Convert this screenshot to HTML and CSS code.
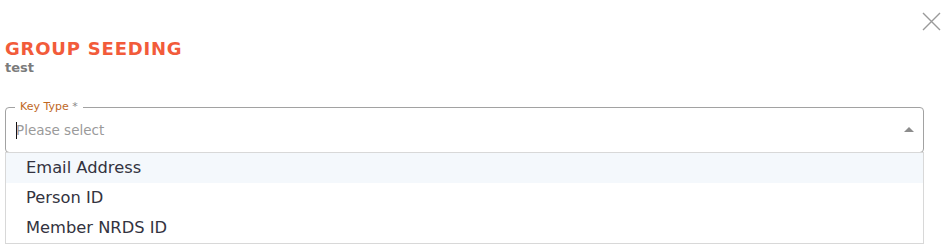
FILE: index.html
```html
<html>
    <head>
        <title>Group Seeding</title>
        <link rel="stylesheet" href="styles.css">
    </head>
    <body>
        <div class="dialog">
            <button class="closeButton" aria-label="close">
                <svg width="19" height="19" viewBox="0 0 19 19">
                    <path d="M1 1 L18 18 M18 1 L1 18" stroke="#9a9a9a" stroke-width="1.4" fill="none"/>
                </svg>
            </button>
            <div class="title">GROUP SEEDING</div>
            <div class="subtitle">test</div>

            <div class="field">
                <span class="fieldLabel">Key Type <span class="required">*</span></span>
                <div class="selectRow">
                    <span class="cursor"></span>
                    <span class="placeholder">Please select</span>
                    <span class="arrow"></span>
                </div>
                <ul class="options">
                    <li class="option active">Email Address</li>
                    <li class="option">Person ID</li>
                    <li class="option">Member NRDS ID</li>
                </ul>
            </div>

            <div class="field errorField"></div>
        </div>
    </body>
</html>
```

FILE: styles.css
```css
body{
    margin: 0;
    background: #ffffff;
    font-family: "DejaVu Sans", Verdana, sans-serif;
}
.dialog{
    position: relative;
    padding: 37px 25px 0 5px;
}
.closeButton{
    position: absolute;
    top: 12px;
    right: 8px;
    padding: 0;
    border: none;
    background: none;
    width: 19px;
    height: 19px;
}
.title{
    font-size: 18px;
    line-height: 23px;
    font-weight: bold;
    letter-spacing: 0.8px;
    color: #f25b3a;
}
.subtitle{
    font-size: 13px;
    line-height: 15px;
    font-weight: bold;
    color: #7b7b7b;
}
.field{
    position: relative;
    margin-top: 32px;
    height: 44px;
    border: 1px solid #a2a2a2;
    border-radius: 4px;
}
.fieldLabel{
    position: absolute;
    top: -8px;
    left: 9px;
    padding: 0 5px;
    background: #ffffff;
    font-size: 11px;
    line-height: 14px;
    color: #c0681f;
}
.required{
    color: #8a8a8a;
}
.selectRow{
    display: flex;
    align-items: center;
    height: 44px;
    padding: 0 9px 0 10px;
}
.cursor{
    width: 1px;
    height: 17px;
    background: #111;
    margin-right: -1px;
}
.placeholder{
    flex: 1;
    font-size: 13.5px;
    color: #9a9a9a;
}
.arrow{
    width: 0;
    height: 0;
    border-left: 5px solid transparent;
    border-right: 5px solid transparent;
    border-bottom: 5px solid #8c8c8c;
    margin-bottom: 1px;
}
.options{
    position: absolute;
    top: 44px;
    left: -1px;
    right: -1px;
    margin: 0;
    padding: 0;
    list-style: none;
    background: #ffffff;
    border: 1px solid #d8d8d8;
    z-index: 2;
}
.option{
    height: 30px;
    line-height: 30px;
    padding-left: 20px;
    font-size: 16.3px;
    color: #333340;
}
.option.active{
    background: #f4f8fc;
}
.errorField{
    margin-top: 16px;
    border-color: #a3290f;
}
```
